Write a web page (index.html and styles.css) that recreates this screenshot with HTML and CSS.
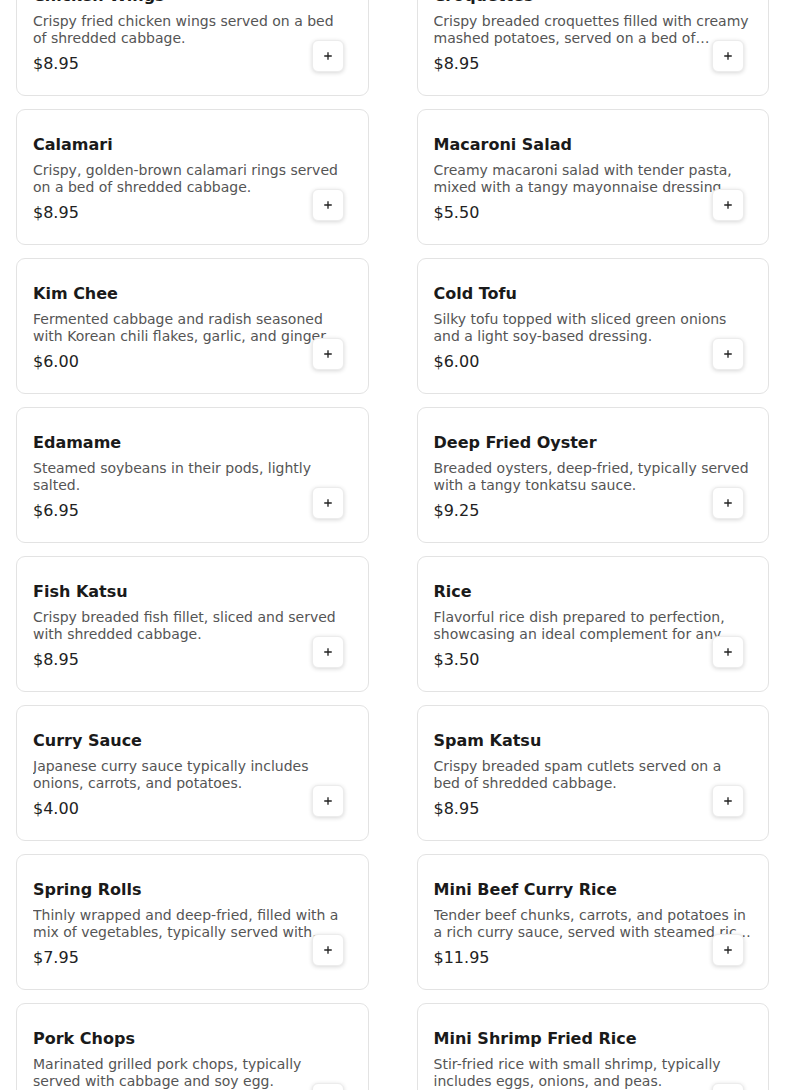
FILE: index.html
```html
<!DOCTYPE html>
<html lang="en">
<head>
<meta charset="utf-8">
<title>Menu</title>
<link rel="stylesheet" href="styles.css">
</head>
<body>
<main class="menu">
  <div class="grid">
    <div class="card"><h3 class="title">Chicken Wings</h3><p class="desc">Crispy fried chicken wings served on a bed of shredded cabbage.</p><div class="price">$8.95</div><button class="add"><svg viewBox="0 0 12 12"><path d="M6 1.5v9M1.5 6h9"/></svg></button></div>
    <div class="card"><h3 class="title">Croquettes</h3><p class="desc">Crispy breaded croquettes filled with creamy mashed potatoes, served on a bed of shredded cabbage.</p><div class="price">$8.95</div><button class="add"><svg viewBox="0 0 12 12"><path d="M6 1.5v9M1.5 6h9"/></svg></button></div>
    <div class="card"><h3 class="title">Calamari</h3><p class="desc">Crispy, golden-brown calamari rings served on a bed of shredded cabbage.</p><div class="price">$8.95</div><button class="add"><svg viewBox="0 0 12 12"><path d="M6 1.5v9M1.5 6h9"/></svg></button></div>
    <div class="card"><h3 class="title">Macaroni Salad</h3><p class="desc">Creamy macaroni salad with tender pasta, mixed with a tangy mayonnaise dressing.</p><div class="price">$5.50</div><button class="add"><svg viewBox="0 0 12 12"><path d="M6 1.5v9M1.5 6h9"/></svg></button></div>
    <div class="card"><h3 class="title">Kim Chee</h3><p class="desc">Fermented cabbage and radish seasoned with Korean chili flakes, garlic, and ginger.</p><div class="price">$6.00</div><button class="add"><svg viewBox="0 0 12 12"><path d="M6 1.5v9M1.5 6h9"/></svg></button></div>
    <div class="card"><h3 class="title">Cold Tofu</h3><p class="desc">Silky tofu topped with sliced green onions and a light soy-based dressing.</p><div class="price">$6.00</div><button class="add"><svg viewBox="0 0 12 12"><path d="M6 1.5v9M1.5 6h9"/></svg></button></div>
    <div class="card"><h3 class="title">Edamame</h3><p class="desc">Steamed soybeans in their pods, lightly salted.</p><div class="price">$6.95</div><button class="add"><svg viewBox="0 0 12 12"><path d="M6 1.5v9M1.5 6h9"/></svg></button></div>
    <div class="card"><h3 class="title">Deep Fried Oyster</h3><p class="desc">Breaded oysters, deep-fried, typically served with a tangy tonkatsu sauce.</p><div class="price">$9.25</div><button class="add"><svg viewBox="0 0 12 12"><path d="M6 1.5v9M1.5 6h9"/></svg></button></div>
    <div class="card"><h3 class="title">Fish Katsu</h3><p class="desc">Crispy breaded fish fillet, sliced and served with shredded cabbage.</p><div class="price">$8.95</div><button class="add"><svg viewBox="0 0 12 12"><path d="M6 1.5v9M1.5 6h9"/></svg></button></div>
    <div class="card"><h3 class="title">Rice</h3><p class="desc">Flavorful rice dish prepared to perfection, showcasing an ideal complement for any meal.</p><div class="price">$3.50</div><button class="add"><svg viewBox="0 0 12 12"><path d="M6 1.5v9M1.5 6h9"/></svg></button></div>
    <div class="card"><h3 class="title">Curry Sauce</h3><p class="desc">Japanese curry sauce typically includes onions, carrots, and potatoes.</p><div class="price">$4.00</div><button class="add"><svg viewBox="0 0 12 12"><path d="M6 1.5v9M1.5 6h9"/></svg></button></div>
    <div class="card"><h3 class="title">Spam Katsu</h3><p class="desc">Crispy breaded spam cutlets served on a bed of shredded cabbage.</p><div class="price">$8.95</div><button class="add"><svg viewBox="0 0 12 12"><path d="M6 1.5v9M1.5 6h9"/></svg></button></div>
    <div class="card"><h3 class="title">Spring Rolls</h3><p class="desc">Thinly wrapped and deep-fried, filled with a mix of vegetables, typically served with sweet chili sauce.</p><div class="price">$7.95</div><button class="add"><svg viewBox="0 0 12 12"><path d="M6 1.5v9M1.5 6h9"/></svg></button></div>
    <div class="card"><h3 class="title">Mini Beef Curry Rice</h3><p class="desc">Tender beef chunks, carrots, and potatoes in a rich curry sauce, served with steamed rice and pickles.</p><div class="price">$11.95</div><button class="add"><svg viewBox="0 0 12 12"><path d="M6 1.5v9M1.5 6h9"/></svg></button></div>
    <div class="card"><h3 class="title">Pork Chops</h3><p class="desc">Marinated grilled pork chops, typically served with cabbage and soy egg.</p><div class="price">$10.95</div><button class="add"><svg viewBox="0 0 12 12"><path d="M6 1.5v9M1.5 6h9"/></svg></button></div>
    <div class="card"><h3 class="title">Mini Shrimp Fried Rice</h3><p class="desc">Stir-fried rice with small shrimp, typically includes eggs, onions, and peas.</p><div class="price">$9.95</div><button class="add"><svg viewBox="0 0 12 12"><path d="M6 1.5v9M1.5 6h9"/></svg></button></div>
  </div>
</main>
</body>
</html>
```
FILE: styles.css
```css
html, body {
  margin: 0;
  padding: 0;
  background: #fff;
  overflow: hidden;
}
body {
  font-family: "DejaVu Sans", sans-serif;
  color: #1a1a1a;
}
.menu {
  padding: 0 16px;
  margin-top: -40px;
}
.grid {
  display: grid;
  grid-template-columns: 1fr 1fr;
  column-gap: 48px;
  row-gap: 13px;
}
.card {
  position: relative;
  height: 136px;
  box-sizing: border-box;
  border: 1px solid #e3e3e3;
  border-radius: 9px;
  padding: 23px 16px 19px;
  background: #fff;
  display: flex;
  flex-direction: column;
}
.title {
  margin: 0 0 5px;
  font-size: 16px;
  line-height: 24px;
  font-weight: bold;
  color: #1a1a1a;
}
.desc {
  margin: 0 0 5px;
  font-size: 14px;
  line-height: 17px;
  height: 34px;
  flex: none;
  color: #555;
  display: -webkit-box;
  -webkit-line-clamp: 2;
  -webkit-box-orient: vertical;
  overflow: hidden;
}
.price {
  font-size: 16px;
  line-height: 24px;
  color: #222;
}
.add {
  position: absolute;
  right: 24px;
  bottom: 23px;
  width: 32px;
  height: 32px;
  padding: 0;
  border: 1px solid #ececec;
  border-radius: 6px;
  background: #fff;
  box-shadow: 0 1px 4px rgba(0, 0, 0, 0.16);
  display: flex;
  align-items: center;
  justify-content: center;
}
.add svg {
  width: 10px;
  height: 10px;
  fill: none;
  stroke: #222;
  stroke-width: 1.6;
}
```
